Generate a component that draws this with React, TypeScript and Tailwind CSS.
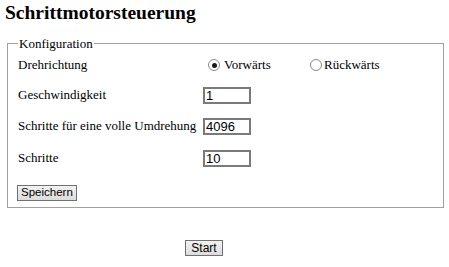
import React from "react";

function Radio({ checked }: { checked?: boolean }) {
  return (
    <span className="relative inline-flex h-[12px] w-[12px] items-center justify-center rounded-full border border-[#8a8a8a] bg-white">
      {checked && <span className="h-[5px] w-[5px] rounded-full bg-[#1a1a1a]" />}
    </span>
  );
}

function TextInput({ value }: { value: string }) {
  return (
    <div
      className="flex h-[17px] w-[48px] items-center border-2 border-[#7a7a7a] bg-white pl-[1px] text-[13px] leading-none text-black"
      style={{ fontFamily: '"Liberation Sans", Arial, sans-serif' }}
    >
      {value}
    </div>
  );
}

function Btn({ label, size, pad }: { label: string; size: string; pad: string }) {
  return (
    <div
      className={`inline-flex h-[16px] items-center justify-center border border-[#707070] bg-gradient-to-b from-[#f2f2f2] to-[#dcdcdc] leading-none text-black ${size} ${pad}`}
      style={{ fontFamily: '"Liberation Sans", Arial, sans-serif' }}
    >
      {label}
    </div>
  );
}

export default function App() {
  return (
    <div
      className="h-[267px] w-[449px] bg-white text-[13px] text-black"
      style={{ fontFamily: '"Liberation Serif", "Times New Roman", serif' }}
    >
      <div className="pl-[5px] pt-[2px] text-[19.5px] font-bold leading-[22px]">Schrittmotorsteuerung</div>
      <fieldset className="ml-[7px] mt-[12px] w-[437px] border border-[#a0a0a0] pb-[4px] pl-[10px]">
        <legend className="px-[1px] leading-[15px]">Konfiguration</legend>
        <div className="flex h-[24px] items-center pt-[4px]">
          <div className="w-[185px]">Drehrichtung</div>
          <div className="flex w-[102px] items-center pl-[5px]">
            <Radio checked />
            <span className="ml-[4px]">Vorwärts</span>
          </div>
          <div className="flex items-center pl-[5px]">
            <Radio />
            <span className="ml-[2px]">Rückwärts</span>
          </div>
        </div>
        <div className="mt-[8px] flex h-[24px] items-center">
          <div className="w-[185px]">Geschwindigkeit</div>
          <TextInput value="1" />
        </div>
        <div className="mt-[7px] flex h-[24px] items-center">
          <div className="w-[185px]">Schritte für eine volle Umdrehung</div>
          <TextInput value="4096" />
        </div>
        <div className="mt-[8px] flex h-[24px] items-center">
          <div className="w-[185px]">Schritte</div>
          <TextInput value="10" />
        </div>
        <div className="mt-[11px] flex h-[22px] items-center">
          <div className="-ml-[1px]">
            <Btn label="Speichern" size="text-[11.5px]" pad="px-[3px]" />
          </div>
        </div>
      </fieldset>
      <div className="mt-[32px] flex justify-center pr-[41px]">
        <Btn label="Start" size="text-[12px]" pad="px-[5px]" />
      </div>
    </div>
  );
}
